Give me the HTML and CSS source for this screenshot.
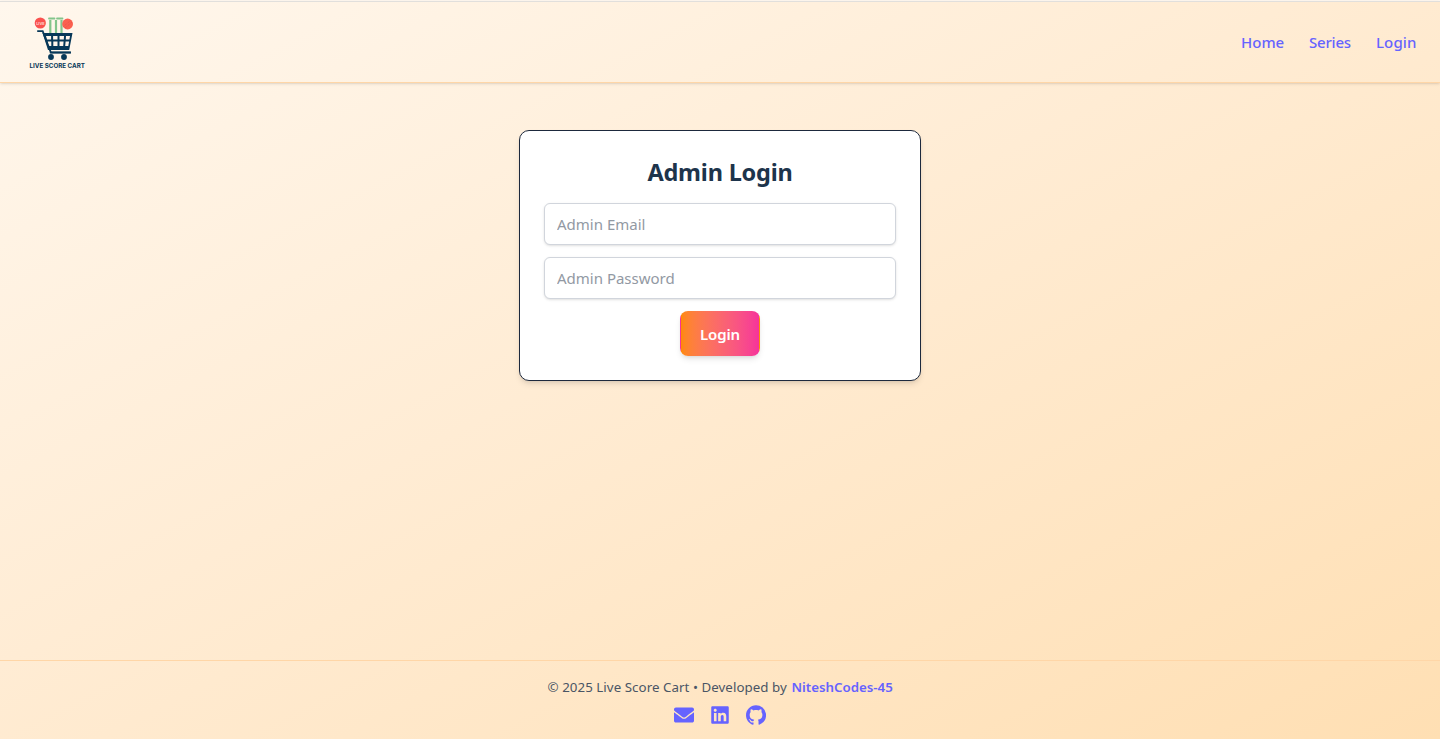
FILE: index.html
```html
<!DOCTYPE html>
<html lang="en">
<head>
<meta charset="utf-8">
<title>Live Score Cart</title>
<link rel="stylesheet" href="styles.css">
</head>
<body>
<div class="page">
  <header class="header">
    <a class="brand" aria-label="Live Score Cart">
      <svg class="logo" viewBox="0 1 66 64" width="66" height="64">
        <g fill="none" stroke="#83c58b" stroke-width="2.2"><path d="M26.3 11v14M32 11v14M37.5 11v14"/><path d="M25 9.5h5.500M33 9.500h5.500" stroke-width="1.8" stroke-linecap="round"/></g>
        <circle cx="16.3" cy="14" r="5.6" fill="#fa514f"/>
        <circle cx="43.6" cy="15" r="5.4" fill="#fb604f"/>
        <path d="M39.5 17.5l7-6M41 19l7-6" stroke="#df4b43" stroke-width=".7" stroke-dasharray="1 1"/>
        <path d="M13.2 22.1h5.500l8.200 21.400h20" fill="none" stroke="#073858" stroke-width="1.8"/>
        <path fill="#073858" fill-rule="evenodd" d="M18.500 24h30l-3.300 17H24zM22 27l.9 3.600h4.200V27zM29.100 27v3.600h4.400V27zM35.500 27v3.600h4.300l.2-3.600zM42 27l-.2 3.600h3.600l.6-3.600zM23.500 32.600l1 4.400h2.800v-4.400zM29.300 32.600V37h4.200v-4.400zM35.500 32.600V37h3.700l.4-4.400zM41.600 32.600l-.4 4.400h3.100l.8-4.400z"/>
        <path d="M25.8 43.500h21" stroke="#073858" stroke-width="1.6"/>
        <circle cx="27" cy="48" r="2.9" fill="#073858"/><circle cx="40" cy="48" r="2.9" fill="#073858"/>
        <text class="logo-text" x="5.5" y="58.6" textLength="55.5" lengthAdjust="spacingAndGlyphs">LIVE SCORE CART</text>
        <text class="logo-live" x="12.2" y="15.6" textLength="8.4" lengthAdjust="spacingAndGlyphs">LIVE</text>
      </svg>
    </a>
    <nav class="nav"><a class="home">Home</a><a class="series">Series</a><a class="signin">Login</a></nav>
  </header>
  <main class="main">
    <form class="card">
      <h2 class="title">Admin Login</h2>
      <input class="field" type="email" placeholder="Admin Email">
      <input class="field" type="password" placeholder="Admin Password">
      <button class="submit" type="button">Login</button>
    </form>
  </main>
  <footer class="footer">
    <p class="credit"><span class="copyright">© 2025 Live Score Cart • Developed by </span><a class="author">NiteshCodes-45</a></p>
    <div class="social">
      <svg viewBox="0 0 512 512" width="20" height="20"><path d="M502.3 190.8c3.9-3.1 9.7-.2 9.7 4.7V400c0 26.500-21.500 48-48 48H48c-26.500 0-48-21.500-48-48V195.600c0-5 5.700-7.800 9.700-4.700 22.400 17.400 52.100 39.500 154.100 113.600 21.100 15.400 56.700 47.800 92.200 47.600 35.700.3 72-32.800 92.300-47.600 102-74.100 131.600-96.300 154-113.700zM256 320c23.200.4 56.600-29.200 73.400-41.400 132.700-96.300 142.800-104.700 173.400-128.700 5.800-4.500 9.200-11.500 9.200-18.900v-19c0-26.500-21.500-48-48-48H48c-26.500 0-48 21.500-48 48v19c0 7.400 3.400 14.300 9.200 18.900 30.600 23.900 40.700 32.400 173.400 128.700 16.800 12.200 50.200 41.800 73.400 41.400z"/></svg>
      <svg viewBox="0 0 448 512" width="20" height="20"><path d="M416 32H31.900C14.300 32 0 46.500 0 64.300v383.400C0 465.500 14.300 480 31.900 480H416c17.600 0 32-14.500 32-32.300V64.300c0-17.800-14.400-32.300-32-32.300zM135.400 416H69V202.200h66.500V416zm-33.200-243c-21.300 0-38.500-17.300-38.500-38.500S80.900 96 102.200 96c21.200 0 38.500 17.300 38.500 38.500 0 21.300-17.200 38.500-38.500 38.500zm282.100 243h-66.400V312c0-24.800-.5-56.700-34.500-56.700-34.600 0-39.900 27-39.900 54.900V416h-66.400V202.200h63.700v29.200h.9c8.900-16.800 30.600-34.500 62.900-34.500 67.200 0 79.700 44.300 79.700 101.900V416z"/></svg>
      <svg viewBox="0 0 16 16" width="20" height="20"><path d="M8 .2C3.580.2 0 3.780 0 8.200c0 3.540 2.290 6.530 5.470 7.590.4.070.550-.170.550-.380v-1.490c-2.010.37-2.530-.49-2.690-.94-.09-.23-.48-.94-.82-1.130-.28-.15-.68-.52-.01-.53.63-.01 1.080.58 1.230.82.72 1.210 1.870.87 2.330.66.07-.52.28-.87.51-1.070-1.780-.2-3.640-.89-3.640-3.950 0-.87.31-1.590.82-2.150-.08-.2-.36-1.020.08-2.120 0 0 .67-.21 2.200.82.640-.18 1.320-.27 2-.27s1.360.09 2 .27c1.530-1.040 2.200-.82 2.200-.82.44 1.100.16 1.920.08 2.120.51.56.82 1.270.82 2.150 0 3.070-1.870 3.750-3.650 3.950.29.25.54.73.54 1.480v2.200c0 .21.15.46.55.38A8 8 0 0 0 8 .2z"/></svg>
    </div>
  </footer>
</div>
</body>
</html>
```
FILE: styles.css
```css
* { box-sizing: border-box; }
body { margin: 0; font-family: "Noto Sans", "Open Sans", sans-serif; font-size: 15px; line-height: 24px; }
.page { height: 739px; display: flex; flex-direction: column; border-top: 1px solid #fff8f0; background: linear-gradient(to bottom right, #fff7ed, #ffecd4 45%, #ffdfb3); box-shadow: inset 0 1px #e1dfdc; }
.header { height: 82px; flex: none; display: flex; align-items: center; justify-content: space-between; padding: 1px 24px 0; border-bottom: 1px solid #ffd6a7; box-shadow: 0 1px 3px rgba(0,0,0,.1), 0 1px 2px -1px rgba(0,0,0,.1); }
.brand, .logo { display: block; }
.logo-text { font: 700 6.2px "Inter", sans-serif; fill: #073858; }
.logo-live { font: 700 4px "Inter", sans-serif; fill: #ffd5cc; }
.nav { display: flex; gap: 24px; margin-right: -1px; color: #6663ff; font-weight: 500; }
.home { width: 44px; }
.series { width: 43px; letter-spacing: -.2px; }
.signin { width: 41px; letter-spacing: .1px; }
.main { flex: 1; padding-top: 47px; }
.card { width: 402px; height: 251px; margin: 0 auto; padding: 24px; border: 1px solid #1d293d; border-radius: 10px; background: #fff; display: flex; flex-direction: column; align-items: center; box-shadow: 0 4px 6px -1px rgba(0,0,0,.1), 0 2px 4px -2px rgba(0,0,0,.1); }
.title { margin: 1px 0 15px; font-size: 23.5px; line-height: 32px; font-weight: 700; letter-spacing: -.2px; color: #1d344b; }
.field { width: 352px; height: 42px; flex: none; margin: 0 0 12px; padding: 8px 12px; border: 1px solid #d1d5dc; border-radius: 6px; background: #fff; font: 15px/24px "Noto Sans", sans-serif; box-shadow: 0 1px 3px rgba(0,0,0,.1), 0 1px 2px -1px rgba(0,0,0,.1); }
.field::placeholder { color: #9299a3; opacity: 1; }
.submit { width: 80px; height: 45px; flex: none; padding: 1px 0 0; border: 1px solid transparent; border-radius: 8px; background: linear-gradient(to right in oklab, #ff8904, #f6339a); color: #fff; font: 600 15px/24px "Noto Sans", sans-serif; letter-spacing: -.1px; box-shadow: 0 4px 6px -1px rgba(0,0,0,.1), 0 2px 4px -2px rgba(0,0,0,.1); }
.footer { height: 79px; flex: none; padding-top: 16px; border-top: 1px solid #ffd6a7; }
.credit { margin: 0; display: flex; justify-content: center; gap: 4px; font-size: 13.3px; line-height: 20px; color: #4a5565; white-space: nowrap; }
.copyright { width: 240px; letter-spacing: .06px; }
.author { width: 101px; color: #6663ff; font-weight: 600; }
.social { display: flex; justify-content: center; gap: 16px; margin-top: 8px; fill: #6663ff; }
```
